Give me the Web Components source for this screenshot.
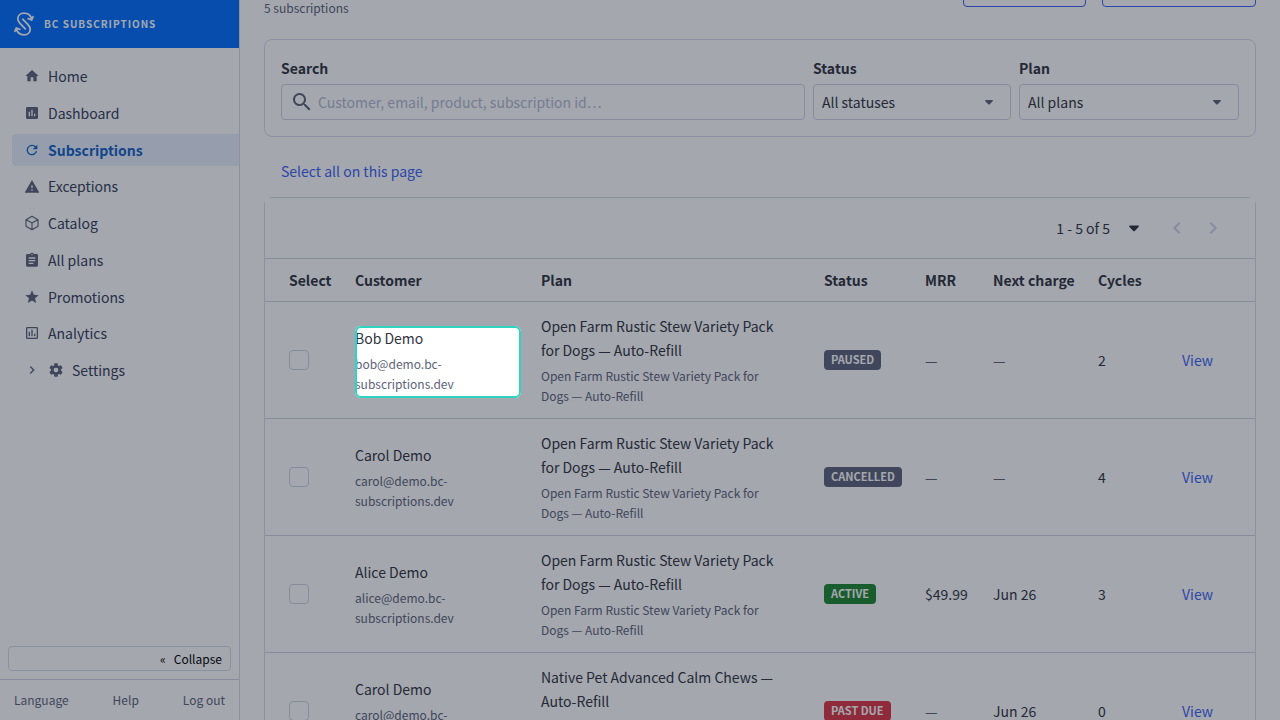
<!DOCTYPE html>
<html lang="en">
<head>
<meta charset="utf-8">
<meta name="viewport" content="width=device-width, initial-scale=1">
<title>BC Subscriptions</title>
<style>
    html, body {
        margin: 0;
        height: 100%;
    }

    body {
        overflow: hidden;
        background: #fff;
        color: #313440;
        font-family: "Source Sans Pro", "Noto Sans CJK SC", sans-serif;
        font-size: 14px;
        line-height: 24px;
    }
</style>
</head>
<body>
<app-shell>
    <side-nav slot="nav"></side-nav>
    <page-header>5 subscriptions</page-header>
    <filter-card></filter-card>
    <select-all>Select all on this page</select-all>
    <subscription-table></subscription-table>
</app-shell>

<script>
const icons = {
    home: '<path d="M10 20v-6h4v6h5v-8h3L12 3 2 12h3v8z"/>',
    dashboard: '<path d="M19 3H5a2 2 0 0 0-2 2v14a2 2 0 0 0 2 2h14a2 2 0 0 0 2-2V5a2 2 0 0 0-2-2zM9 17H7v-7h2v7zm4 0h-2V7h2v10zm4 0h-2v-4h2v4z"/>',
    refresh: '<path d="M17.65 6.35A8 8 0 1 0 19.73 14h-2.08A6 6 0 1 1 12 6c1.66 0 3.14.69 4.22 1.78L13 11h7V4z"/>',
    warning: '<path d="M1 22h22L12 3 1 22zm12-3h-2v-2h2v2zm0-4h-2v-4h2v4z"/>',
    cube: '<path fill="none" stroke="currentColor" stroke-width="1.7" stroke-linejoin="round" d="M12 2l9 5v10l-9 5-9-5V7zM3.500 7.300L12 12l8.500-4.700M12 12v10"/>',
    clipboard: '<path d="M19 3h-4.180a3 3 0 0 0-5.640 0H5a2 2 0 0 0-2 2v15a2 2 0 0 0 2 2h14a2 2 0 0 0 2-2V5a2 2 0 0 0-2-2zm-7 0a1 1 0 1 1 0 2 1 1 0 0 1 0-2zm2 15H7v-2h7v2zm3-4H7v-2h10v2zm0-4H7V8h10v2z"/>',
    star: '<path d="M12 17.270L18.180 21l-1.640-7.030L22 9.240l-7.190-.61L12 2 9.190 8.630 2 9.240l5.460 4.730L5.820 21z"/>',
    analytics: '<path d="M9 17H7v-7h2v7zm4 0h-2V7h2v10zm4 0h-2v-4h2v4zm2 2H5V5h14v14zm0-16H5a2 2 0 0 0-2 2v14a2 2 0 0 0 2 2h14a2 2 0 0 0 2-2V5a2 2 0 0 0-2-2z"/>',
    gear: '<path d="M19.430 12.980c.04-.32.07-.64.07-.98s-.03-.66-.07-.98l2.110-1.650a.5.5 0 0 0 .12-.64l-2-3.460a.5.5 0 0 0-.61-.22l-2.490 1a7.300 7.300 0 0 0-1.690-.98l-.38-2.650A.49.49 0 0 0 14 2h-4a.49.49 0 0 0-.49.42l-.38 2.650c-.61.25-1.170.59-1.690.98l-2.490-1a.5.5 0 0 0-.61.22l-2 3.460a.49.49 0 0 0 .12.64l2.110 1.650c-.04.32-.07.65-.07.98s.03.66.07.98l-2.110 1.650a.5.5 0 0 0-.12.64l2 3.460c.12.22.39.3.61.22l2.490-1c.52.4 1.080.73 1.690.98l.38 2.650c.03.24.24.42.49.42h4c.25 0 .46-.18.49-.42l.38-2.650c.61-.25 1.170-.59 1.690-.98l2.490 1c.23.09.49 0 .61-.22l2-3.460a.5.5 0 0 0-.12-.64l-2.110-1.650zM12 15.500a3.500 3.500 0 1 1 0-7 3.500 3.500 0 0 1 0 7z"/>',
    left: '<path d="M15.410 7.410L14 6l-6 6 6 6 1.410-1.410L10.830 12z"/>',
    right: '<path d="M10 6L8.590 7.410 13.170 12l-4.580 4.590L10 18l6-6z"/>',
    caret: '<path d="M7 9h10a.9.9 0 0 1 .7 1.500l-4.500 4.700a1.700 1.700 0 0 1-2.400 0l-4.500-4.700A.9.9 0 0 1 7 9z"/>',
    search: '<path d="M15.500 14h-.79l-.28-.27a6.500 6.500 0 1 0-.7.7l.27.28v.79l5 4.990L20.490 19l-4.990-5zm-6 0a4.500 4.500 0 1 1 0-9 4.500 4.500 0 0 1 0 9z"/>',
    logo: '<path fill="none" stroke="currentColor" stroke-width="1.800" stroke-linecap="round" stroke-linejoin="round" d="M19.700 7C18.700 3.500 16 1.200 12 1.200 8.200 1.200 5.800 3.600 5.800 6.800c0 1.800.8 3 2 4.300l5.500 5.700M4.300 17C5.300 20.500 8 22.800 12 22.800c3.800 0 6.200-2.400 6.200-5.600 0-1.800-.8-3-2-4.300l-5.500-5.700M16.200 6.700l3.500 1.300L21 4.800M7.800 17.300L4.300 16 3 19.200"/>'
}

const icon = (name, size = 16) => {
    return `<svg width="${size}" height="${size}" viewBox="0 0 24 24" fill="currentColor" aria-hidden="true">${icons[name]}</svg>`
}

// attaches an open shadow root with the given markup
class BaseElement extends HTMLElement {
    constructor() {
        super();
        this.attachShadow({mode: 'open'});
        const template = document.createElement('template');
        template.innerHTML = `<style>* { box-sizing: border-box; } svg { display: block; flex: none; }</style>` + this.render();
        this.shadowRoot.appendChild(template.content.cloneNode(true))
    }
}

class AppShell extends BaseElement {
    render() {
        return `
<style>
    :host {
        display: flex;
        height: 100vh;
    }

    main {
        flex: 1;
        min-width: 0;
        padding: 0 24px;
    }
</style>
<slot name="nav"></slot>
<main><slot></slot></main>
`
    }
}

const navItems = [
    { name: 'Home', icon: 'home' },
    { name: 'Dashboard', icon: 'dashboard' },
    { name: 'Subscriptions', icon: 'refresh', active: true },
    { name: 'Exceptions', icon: 'warning' },
    { name: 'Catalog', icon: 'cube' },
    { name: 'All plans', icon: 'clipboard' },
    { name: 'Promotions', icon: 'star' },
    { name: 'Analytics', icon: 'analytics' },
    { name: 'Settings', icon: 'gear', nested: true },
]

class SideNav extends BaseElement {
    render() {
        return `
<style>
    :host {
        display: flex;
        flex-direction: column;
        flex: none;
        box-sizing: border-box;
        width: 240px;
        border-right: 1px solid #d9dce9;
        color: #34405a;
    }

    .brand {
        display: flex;
        align-items: center;
        gap: 8px;
        height: 48px;
        padding-left: 12px;
        background: #006fff;
        color: #fff;
        font-size: 10px;
        font-weight: 700;
        letter-spacing: 1px;
        text-transform: uppercase;
    }

    ul {
        display: flex;
        flex-direction: column;
        justify-content: space-between;
        min-height: 326px;
        margin: 12px 0 0;
        padding: 0 0 0 12px;
        list-style: none;
    }

    li a {
        display: flex;
        align-items: center;
        gap: 8px;
        height: 32px;
        padding-left: 12px;
        border-radius: 4px 0 0 4px;
        color: inherit;
        text-decoration: none;
    }

    li svg {
        color: #5e637a;
    }

    .active, .active svg {
        color: #1463c4;
    }

    .active {
        background: #e8f1ff;
        font-weight: 700;
    }

    .bottom {
        margin-top: auto;
        padding: 8px;
        border-bottom: 1px solid #d0d3df;
    }

    button {
        display: flex;
        align-items: center;
        justify-content: flex-end;
        gap: 8px;
        width: 100%;
        height: 25px;
        padding: 0 8px;
        border: 1px solid #d9dce9;
        border-radius: 4px;
        background: none;
        color: #000;
        font: inherit;
        font-size: 12px;
    }

    footer {
        display: flex;
        align-items: center;
        justify-content: space-between;
        height: 40px;
        padding: 0 14px;
        font-size: 12px;
    }

    footer a {
        color: #5e637a;
        text-decoration: none;
    }
</style>
<div class="brand">${icon('logo', 24)}<span>BC Subscriptions</span></div>
<nav>
    <ul>
        ${
            navItems.map((item) => {
                return (
                    `<li><a href="#" ${item.active ? 'class="active" aria-current="page"' : ''}>${item.nested ? icon('right') : ''}${icon(item.icon)}<span>${item.name}</span></a></li>`
                )
            }).join('')
        }
    </ul>
</nav>
<div class="bottom"><button type="button"><span>«</span><span>Collapse</span></button></div>
<footer>
    <a href="#">Language</a>
    <a href="#">Help</a>
    <a href="#">Log out</a>
</footer>
`
    }
}

class PageHeader extends BaseElement {
    render() {
        return `
<style>
    /* scrolled so that only the foot of the header is in view */
    :host {
        display: flex;
        align-items: flex-start;
        gap: 16px;
        margin-top: -29px;
        height: 68px;
    }

    p {
        flex: 1;
        align-self: flex-end;
        margin: 0 0 21px;
        color: #5e637a;
        font-size: 12px;
        line-height: 20px;
    }

    button {
        width: 123px;
        height: 36px;
        border: 1px solid #3c64f4;
        border-radius: 4px;
        background: none;
    }

    button + button {
        width: 154px;
    }
</style>
<p><slot></slot></p>
<button type="button" aria-label="Export"></button>
<button type="button" aria-label="Create"></button>
`
    }
}

class FilterCard extends BaseElement {
    render() {
        return `
<style>
    :host {
        display: flex;
        gap: 8px;
        padding: 16px;
        border: 1px solid #d9dce9;
        border-radius: 8px;
    }

    .field {
        display: flex;
        flex-direction: column;
        gap: 4px;
        width: 198px;
    }

    .search {
        flex: 1;
    }

    .plan {
        width: 220px;
    }

    label {
        font-weight: 700;
    }

    .box {
        display: grid;
        grid-template-columns: 1fr auto;
        align-items: center;
        height: 36px;
        border: 1px solid #cfd3e2;
        border-radius: 4px;
        color: #5e637a;
    }

    .search .box {
        grid-template-columns: auto 1fr;
        gap: 4px;
        padding-left: 8px;
    }

    select, input {
        width: 100%;
        height: 100%;
        border: 0;
        outline: none;
        background: none;
        font: inherit;
    }

    input {
        padding: 0;
    }

    input::placeholder {
        color: #b4bad1;
        opacity: 1;
    }

    select {
        grid-area: 1 / 1 / 2 / 3;
        padding: 0 8px;
        appearance: none;
        color: #313440;
    }

    select + svg {
        grid-area: 1 / 2;
        margin-right: 13px;
        pointer-events: none;
    }
</style>
<div class="field search">
    <label for="search">Search</label>
    <div class="box">${icon('search', 24)}<input id="search" type="text" placeholder="Customer, email, product, subscription id…"></div>
</div>
<div class="field">
    <label for="status">Status</label>
    <div class="box"><select id="status"><option>All statuses</option></select>${icon('caret')}</div>
</div>
<div class="field plan">
    <label for="plan">Plan</label>
    <div class="box"><select id="plan"><option>All plans</option></select>${icon('caret')}</div>
</div>
`
    }
}

class SelectAll extends BaseElement {
    render() {
        return `
<style>
    :host {
        display: block;
        margin: 16px 0 8px;
    }

    button {
        display: block;
        height: 36px;
        padding: 0 16px;
        border: 1px solid transparent;
        background: none;
        color: #3c64f4;
        font: inherit;
    }
</style>
<button type="button"><slot></slot></button>
`
    }
}

class StatusBadge extends BaseElement {
    render() {
        return `
<style>
    :host {
        display: block;
        width: fit-content;
        height: 20px;
        padding: 0 7px;
        border-radius: 4px;
        background: #5e637a;
        color: #fff;
        font-size: 11px;
        font-weight: 700;
        line-height: 18px;
        text-transform: uppercase;
    }

    :host([kind="active"]) {
        background: #208831;
    }

    :host([kind="past due"]) {
        background: #db3643;
    }
</style>
<slot></slot>
`
    }
}

// outlines its content and dims the rest of the page
class TourSpotlight extends BaseElement {
    render() {
        return `
<style>
    :host {
        display: block;
        position: relative;
    }

    .ring {
        position: absolute;
        inset: 0 0 -4px;
        z-index: 10;
        border: 2px solid #2dd4bf;
        border-radius: 6px;
        box-shadow: 0 0 0 9999px rgba(15, 23, 42, 0.38);
        pointer-events: none;
    }
</style>
<slot></slot>
<div class="ring"></div>
`
    }
}

const stew = 'Open Farm Rustic Stew Variety Pack for Dogs — Auto-Refill'
const chews = 'Native Pet Advanced Calm Chews — Auto-Refill'

const subscriptions = [
    { name: 'Bob', plan: stew, status: 'Paused', mrr: '—', next: '—', cycles: 2, spotlight: true },
    { name: 'Carol', plan: stew, status: 'Cancelled', mrr: '—', next: '—', cycles: 4 },
    { name: 'Alice', plan: stew, status: 'Active', mrr: '$49.99', next: 'Jun 26', cycles: 3 },
    { name: 'Carol', plan: chews, status: 'Past due', mrr: '—', next: 'Jun 26', cycles: 0 },
]

class SubscriptionTable extends BaseElement {
    customer(row) {
        const text = `<p>${row.name} Demo</p><p class="small">${row.name.toLowerCase()}@demo.bc-<wbr>subscriptions.dev</p>`
        return row.spotlight ? `<tour-spotlight>${text}</tour-spotlight>` : text
    }

    value(text) {
        return text === '—' ? `<span class="none">${text}</span>` : text
    }

    render() {
        return `
<style>
    :host {
        display: block;
        border: 1px solid #d9dce9;
        border-radius: 8px;
    }

    .pager {
        display: flex;
        align-items: center;
        justify-content: flex-end;
        height: 60px;
        padding-right: 24px;
        background: #fff;
    }

    .pager button {
        display: flex;
        align-items: center;
        padding: 0;
        border: 0;
        background: none;
        color: inherit;
        font: inherit;
    }

    .range {
        gap: 14px;
        margin-right: 15px;
    }

    .pager button:disabled {
        justify-content: center;
        width: 36px;
        color: #d0d3e2;
    }

    table {
        width: 100%;
        table-layout: fixed;
        border-collapse: separate;
        border-spacing: 0;
    }

    th, td {
        padding: 0 20px 0 0;
        border-bottom: 1px solid #cfd3e2;
        text-align: left;
        vertical-align: middle;
    }

    th {
        height: 44px;
        padding-right: 0;
        border-top: 1px solid #cfd3e2;
        font-weight: 700;
        white-space: nowrap;
    }

    td {
        height: 117px;
    }

    th:first-child, td:first-child {
        padding-left: 24px;
    }

    td:nth-child(3) {
        padding-right: 40px;
    }

    td:nth-child(n+4) {
        padding-right: 0;
    }

    p {
        margin: 0;
    }

    .small {
        margin-top: 4px;
        font-size: 12px;
        line-height: 20px;
    }

    .small, .none {
        color: #5e637a;
    }

    input {
        display: block;
        width: 20px;
        height: 20px;
        margin: 0;
        appearance: none;
        border: 1px solid #cfd3e2;
        border-radius: 4px;
    }

    a {
        color: #3c64f4;
        text-decoration: none;
    }
</style>
<div class="pager">
    <button type="button" class="range">1 - 5 of 5${icon('caret', 20)}</button>
    <button type="button" disabled aria-label="Previous page">${icon('left', 24)}</button>
    <button type="button" disabled aria-label="Next page">${icon('right', 24)}</button>
</div>
<table>
    <colgroup>
        <col style="width: 90px"><col style="width: 186px"><col>
        <col style="width: 101px"><col style="width: 68px"><col style="width: 105px">
        <col style="width: 84px"><col style="width: 73px">
    </colgroup>
    <thead>
        <tr><th>Select</th><th>Customer</th><th>Plan</th><th>Status</th><th>MRR</th><th>Next charge</th><th>Cycles</th><th></th></tr>
    </thead>
    <tbody>
        ${
            subscriptions.map((row) => {
                return (
                    `<tr>
                        <td><input type="checkbox" aria-label="Select ${row.name} Demo"></td>
                        <td>${this.customer(row)}</td>
                        <td><p>${row.plan}</p><p class="small">${row.plan}</p></td>
                        <td><status-badge kind="${row.status.toLowerCase()}">${row.status}</status-badge></td>
                        <td>${this.value(row.mrr)}</td>
                        <td>${this.value(row.next)}</td>
                        <td>${row.cycles}</td>
                        <td><a href="#">View</a></td>
                    </tr>`
                )
            }).join('')
        }
    </tbody>
</table>
`
    }
}

customElements.define('status-badge', StatusBadge);
customElements.define('tour-spotlight', TourSpotlight);
customElements.define('side-nav', SideNav);
customElements.define('page-header', PageHeader);
customElements.define('filter-card', FilterCard);
customElements.define('select-all', SelectAll);
customElements.define('subscription-table', SubscriptionTable);
customElements.define('app-shell', AppShell);
</script>
</body>
</html>
